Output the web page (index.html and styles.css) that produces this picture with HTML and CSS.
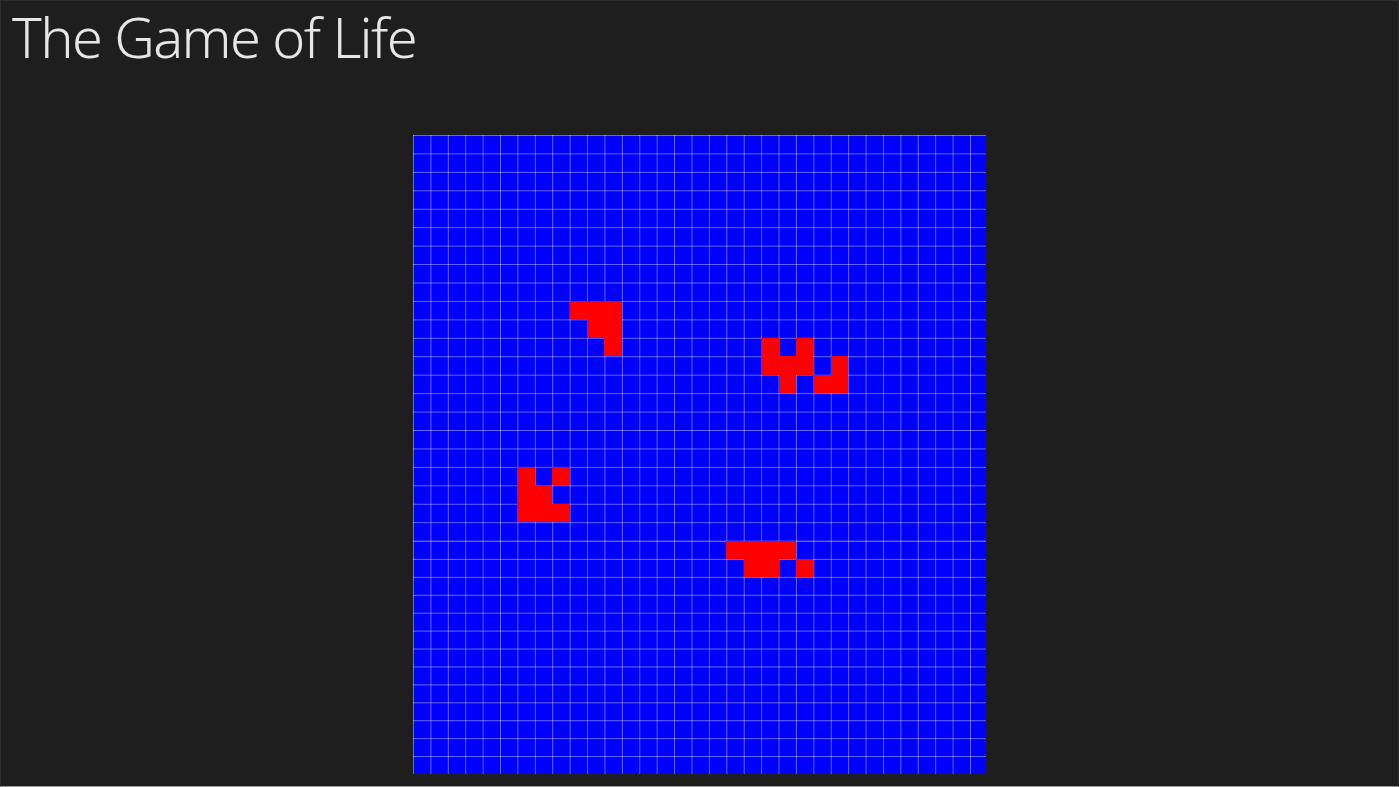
FILE: index.html
```html
<!DOCTYPE html>
<html lang="en">
<head>
<meta charset="utf-8">
<title>The Game of Life</title>
<link rel="stylesheet" href="styles.css">
</head>
<body>
<div class="window">
  <header class="header">
    <h1 class="title">The Game of Life</h1>
  </header>
  <main class="stage">
    <div class="board">
      <div class="band band-top">
        <div class="alive" style="grid-area: 10 / 10"></div>
        <div class="alive" style="grid-area: 10 / 11"></div>
        <div class="alive" style="grid-area: 10 / 12"></div>
        <div class="alive" style="grid-area: 11 / 11"></div>
        <div class="alive" style="grid-area: 11 / 12"></div>
        <div class="alive" style="grid-area: 12 / 12"></div>

        <div class="alive" style="grid-area: 12 / 21"></div>
        <div class="alive" style="grid-area: 12 / 23"></div>
        <div class="alive" style="grid-area: 13 / 21"></div>
        <div class="alive" style="grid-area: 13 / 22"></div>
        <div class="alive" style="grid-area: 13 / 23"></div>
        <div class="alive" style="grid-area: 13 / 25"></div>
        <div class="alive" style="grid-area: 14 / 22"></div>
        <div class="alive" style="grid-area: 14 / 24"></div>
        <div class="alive" style="grid-area: 14 / 25"></div>

        <div class="alive" style="grid-area: 19 / 7"></div>
        <div class="alive" style="grid-area: 19 / 9"></div>
        <div class="alive" style="grid-area: 20 / 7"></div>
        <div class="alive" style="grid-area: 20 / 8"></div>
        <div class="alive" style="grid-area: 21 / 7"></div>
        <div class="alive" style="grid-area: 21 / 8"></div>
        <div class="alive" style="grid-area: 21 / 9"></div>
      </div>
      <div class="band band-bottom">
        <div class="alive" style="grid-area: 1 / 19"></div>
        <div class="alive" style="grid-area: 1 / 20"></div>
        <div class="alive" style="grid-area: 1 / 21"></div>
        <div class="alive" style="grid-area: 1 / 22"></div>
        <div class="alive" style="grid-area: 2 / 20"></div>
        <div class="alive" style="grid-area: 2 / 21"></div>
        <div class="alive" style="grid-area: 2 / 23"></div>
      </div>
    </div>
  </main>
</div>
</body>
</html>
```

FILE: styles.css
```css
html, body {
  margin: 0;
  padding: 0;
  height: 100%;
  background: #1e1e1e;
}

.window {
  box-sizing: border-box;
  height: 100vh;
  display: flex;
  flex-direction: column;
  background: #1e1e1e;
  border: 1px solid #2e2e2e;
  border-bottom-color: #9a9a9a;
}

.header {
  padding: 0 0 0 11px;
  height: 134px;
  flex: none;
}

.title {
  margin: 0;
  font-family: "Noto Sans", "Open Sans", sans-serif;
  font-weight: 300;
  font-size: 56px;
  line-height: 70px;
  letter-spacing: -1.6px;
  color: #e6e6e6;
}

.stage {
  flex: none;
  display: flex;
  justify-content: center;
}

.board {
  width: 573px;
  height: 639px;
  display: flex;
  flex-direction: column;
  overflow: hidden;
  background-color: #0000ff;
}

.band {
  display: grid;
  grid-template-columns: repeat(32, 17.42px) 1fr;
  background-image:
    linear-gradient(to right, rgba(255, 255, 255, 0.4) 1px, transparent 1px),
    linear-gradient(to bottom, rgba(255, 255, 255, 0.4) 1px, transparent 1px);
  background-repeat: repeat;
}

.band-top {
  height: 406px;
  grid-template-rows: repeat(22, 18.45px);
  background-size: 17.42px 100%, 100% 18.45px;
}

.band-bottom {
  height: 233px;
  grid-template-rows: repeat(13, 1fr);
  background-size: 17.42px 100%, 100% calc(233px / 13);
}

.alive {
  background: #ff0000;
}
```
